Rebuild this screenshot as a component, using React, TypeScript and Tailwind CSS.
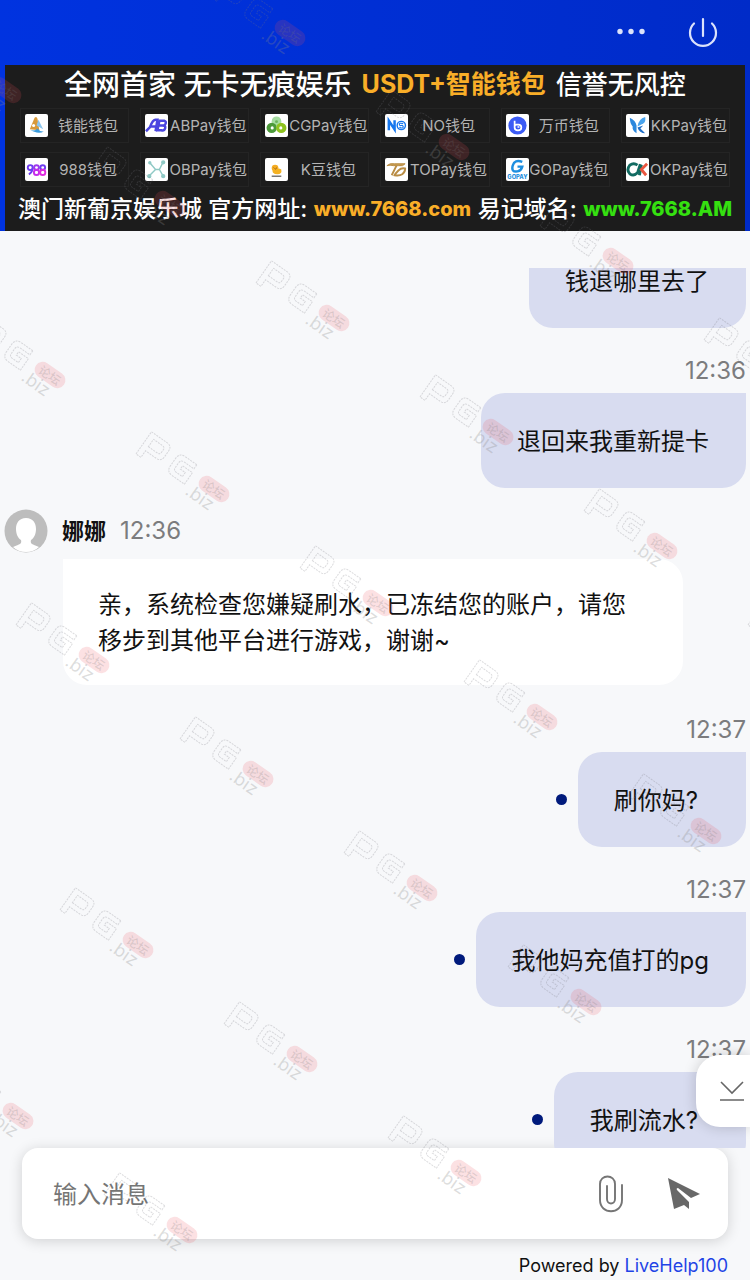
import type { ReactNode } from 'react';

const wallets: { name: string; icon: ReactNode }[] = [
  {
    name: '钱能钱包',
    icon: (
      <>
        <path d="M5 16L10 4q2-2 3 1l2 12z" fill="#d99a3a" />
        <circle cx="9" cy="12" r="1.6" fill="#fff" />
        <path d="M12 12l2-6 5 10z" fill="#8cc6ee" />
        <path d="M4 16q5 3 9-1 3 4 7 3-6 4-16-2z" fill="#3a9bdc" />
      </>
    ),
  },
  {
    name: 'ABPay钱包',
    icon: (
      <g fill="none" stroke="#4b46e0" strokeWidth="2.6">
        <path d="M1 18l4-4q3-8 6-8h2l-2 12M6 13h6" />
        <path d="M14 7h6q3 1 1 4-1 1-3 1h-4M18 12q4 0 3 3t-4 2h-4l2-10" />
      </g>
    ),
  },
  {
    name: 'CGPay钱包',
    icon: (
      <>
        <circle cx="12" cy="7.5" r="5" fill="#a5dca0" />
        <circle cx="7" cy="14.5" r="5.4" fill="#4c9a3a" />
        <circle cx="17" cy="14.5" r="5.4" fill="#8fc31f" />
        <circle cx="7.5" cy="14.5" r="1.6" fill="#fff" />
        <circle cx="16.5" cy="14.5" r="1.6" fill="#fff" />
        <circle cx="12" cy="8" r="1.5" fill="#6bb35c" />
      </>
    ),
  },
  {
    name: 'NO钱包',
    icon: (
      <g fill="none" stroke="#1677ee">
        <path d="M4 17V7l6 9V6.5" strokeWidth="2.6" />
        <circle cx="17" cy="12" r="4.3" strokeWidth="1.5" />
        <path d="M19 10q-4-1-4 .7t2 1.3 2 1.5-4 .5" strokeWidth="1.2" />
      </g>
    ),
  },
  {
    name: '万币钱包',
    icon: (
      <>
        <circle cx="12" cy="12" r="9.5" fill="#3b5bf5" />
        <path d="M9 7v7q0 3 3.500 3t3.500-3-3-3h-2q-2 0-2 2" fill="none" stroke="#fff" strokeWidth="1.8" />
        <path d="M12 13.5h2" stroke="#fff" strokeWidth="1.5" />
      </>
    ),
  },
  {
    name: 'KKPay钱包',
    icon: (
      <>
        <path d="M4 4q6 3 7 8v8q-5-3-4-7-3-3-3-9z" fill="#2b87dd" />
        <path d="M20 3q-7 2-8 10l6-3q3-2 2-7z" fill="#49a4ee" />
        <path d="M12 14l6-2-3 3 5 5q-6 0-8-6z" fill="#1f6fc8" />
      </>
    ),
  },
  {
    name: '988钱包',
    icon: (
      <g fill="none" strokeWidth="2">
        <circle cx="5.5" cy="10" r="2.6" stroke="#6f3df0" />
        <path d="M8 10q0 5-4 7" stroke="#6f3df0" />
        <circle cx="12" cy="10" r="2.5" stroke="#9c36ee" />
        <circle cx="12" cy="15" r="2.7" stroke="#c52bec" />
        <circle cx="18.5" cy="10" r="2.5" stroke="#6f3df0" />
        <circle cx="18.5" cy="15" r="2.7" stroke="#e02be0" />
      </g>
    ),
  },
  {
    name: 'OBPay钱包',
    icon: (
      <g stroke="#8fc9c5" strokeWidth="1.5" fill="#8fc9c5">
        <path d="M5 5l6 7h4l4-8M11 12l-7 7M15 12l4 7" fill="none" />
        <circle cx="5" cy="5" r="1" />
        <circle cx="19" cy="4.5" r="1.5" />
        <circle cx="4.5" cy="19" r="1.5" />
        <circle cx="19" cy="19" r="1.5" />
      </g>
    ),
  },
  {
    name: 'K豆钱包',
    icon: (
      <>
        <circle cx="10.5" cy="10.5" r="3.5" fill="#f4ac22" />
        <path d="M8 12h4q2-2 5 0 1 5-4 5-6 0-5-5z" fill="#f4b223" />
        <path d="M9 10l1 1m2-1l-1 2" stroke="#9a5e10" />
        <path d="M7 19h10" stroke="#777" strokeWidth="1.5" />
      </>
    ),
  },
  {
    name: 'TOPay钱包',
    icon: (
      <g fill="none" stroke="#b98d45">
        <path d="M2 8q3-3 8-2h11q-2 3-7 2H9q-4-1-7 0z" fill="#c79b52" />
        <path d="M12 8L7 18M21 11q-4-1-7 2t-4 5q5 1 8-1t3-6z" strokeWidth="2" />
      </g>
    ),
  },
  {
    name: 'GOPay钱包',
    icon: (
      <>
        <path d="M17 4q-8-3-10 4t5 6q4-1 5-5h-5" fill="none" stroke="#1e8fe0" strokeWidth="2.5" />
        <text x="12" y="22" textAnchor="middle" fontSize="6" fontWeight="800" fill="#1e8fe0">GOPAY</text>
      </>
    ),
  },
  {
    name: 'OKPay钱包',
    icon: (
      <g fill="none" strokeWidth="3">
        <path d="M12 7.5q-4-3-8 0-4 5 0 9 4 3 8-1l3-9" stroke="#126b62" />
        <path d="M14 18l2-11" stroke="#126b62" />
        <path d="M22 6l-6 6 5 6" stroke="#e8563f" />
      </g>
    ),
  },
];

const columns = [-4, -3, -2, -1, 0, 1, 2, 3];
const rows = [-1, 0, 1, 2, 3, 4, 5, 6];

const Watermark = () => (
  <svg className="pointer-events-none absolute inset-0 z-20 h-full w-full" aria-hidden="true">
    <defs>
      <g id="mark" transform="rotate(35)">
        <g fill="none" stroke="#77777f" strokeOpacity="0.26" strokeWidth="1" strokeDasharray="2 1">
          <path d="M-84 16v-27h19q6 0 6 6v7q0 6-6 6h-13v8zM-78 3h11q3 0 3-3v-3q0-3-3-3h-11z" />
          <path d="M-28 -10h-14q-7 0-7 7v9q0 7 7 7h15V-1h-12v4h6v5h-7q-4 0-4-3v-6q0-4 4-4h12z" />
        </g>
        <rect x="-17" y="-8" width="34" height="16" rx="8" fill="#f04b5a" fillOpacity="0.17" />
        <text x="0" y="5" textAnchor="middle" fontSize="12" fontWeight="500" fill="#777" fillOpacity="0.22">论坛</text>
        <text x="-22" y="21" fontSize="18" fill="#888" fillOpacity="0.28">.biz</text>
      </g>
    </defs>
    {columns.map((a) =>
      rows.map((b) => <use key={`${a}:${b}`} href="#mark" x={334 + a * 164 - b * 120} y={318 + a * 114 + b * 171} />),
    )}
  </svg>
);

const Banner = () => (
  <div className="mx-[5px] flex h-[166px] flex-col bg-[#1c1c1c] text-white">
    <p className="flex h-[43px] items-center justify-center gap-[10px] pb-1 text-[26px] font-medium whitespace-nowrap">
      <span className="text-[28px]">全网首家 无卡无痕娱乐</span>
      <b className="text-[25px] font-bold text-[#f9ae28]">USDT+智能钱包</b>
      <span>信誉无风控</span>
    </p>
    <ul className="grid grid-cols-6 gap-x-[11px] gap-y-[9px] px-[15px]">
      {wallets.map((wallet) => (
        <li key={wallet.name} className="flex h-[35px] items-center border border-[#242424] pl-1">
          <svg viewBox="0 0 24 24" className="h-[23px] w-[23px] shrink-0 rounded-xs bg-white">
            {wallet.icon}
          </svg>
          <span className="flex-1 text-center text-[15px] leading-5 whitespace-nowrap text-[#b4b4b4]">{wallet.name}</span>
        </li>
      ))}
    </ul>
    <p className="flex flex-1 items-center justify-between px-[13px] text-[23px] font-medium whitespace-nowrap">
      <span>澳门新葡京娱乐城 官方网址:</span>
      <a href="#com" className="text-[20px] font-extrabold text-[#f9ae28]">www.7668.com</a>
      <span>易记域名:</span>
      <a href="#am" className="text-[20px] font-extrabold text-[#35e010]">www.7668.AM</a>
    </p>
  </div>
);

const Header = () => (
  <header className="bg-linear-to-r from-[#0033e0] to-[#002bc8]">
    <div className="flex h-[65px] items-center justify-end gap-10 pr-[31px] text-[#dbe2fb]">
      <button type="button" aria-label="More">
        <svg viewBox="0 0 32 32" className="h-8 w-8" fill="currentColor">
          <circle cx="5" cy="14.5" r="2.7" />
          <circle cx="16" cy="14.5" r="2.7" />
          <circle cx="27" cy="14.5" r="2.7" />
        </svg>
      </button>
      <button type="button" aria-label="End chat">
        <svg viewBox="0 0 32 32" className="h-8 w-8" fill="none" stroke="currentColor" strokeWidth="2.2" strokeLinecap="round">
          <path d="M16 2v17M7 6.500a13 13 0 1 0 18 0" />
        </svg>
      </button>
    </div>
    <Banner />
  </header>
);

const Bubble = ({ text, unread }: { text: string; unread?: boolean }) => (
  <div className="flex items-center justify-end gap-[11px]">
    {unread && <span className="h-[11px] w-[11px] rounded-full bg-[#001a7c]" />}
    <p
      className={`rounded-3xl rounded-tr-none bg-[#d8dcf0] pt-[31px] pb-7 pl-9 text-[24px] leading-9 ${
        text.endsWith('?') ? 'pr-12' : 'pr-[37px]'
      }`}
    >
      {text}
    </p>
  </div>
);

const Sent = ({ time, text, unread }: { time: string; text: string; unread?: boolean }) => (
  <article>
    <time className="mt-[29px] mb-2 block text-right text-[24px] leading-7 text-[#7c7c7e]">{time}</time>
    <Bubble text={text} unread={unread} />
  </article>
);

const Received = () => (
  <article className="pt-[21px]">
    <div className="flex items-center gap-[14px]">
      <svg viewBox="0 0 44 44" className="h-[44px] w-[44px]">
        <circle cx="22" cy="22" r="21.5" fill="#bdbdbd" />
        <path d="M22 9c-7 0-10 5-10 11 0 5 2 9 5 11 1 4-1 4-8 7q5 5 13 5t13-5c-7-3-9-3-8-7 3-2 5-6 5-11 0-6-3-11-10-11z" fill="#fff" />
      </svg>
      <b className="text-[22px] leading-7 font-bold">娜娜</b>
      <time className="text-[24px] leading-7 text-[#7c7c7e]">12:36</time>
    </div>
    <p className="mt-[6px] mr-[63px] ml-[59px] rounded-3xl rounded-tl-none bg-white pt-7 pr-[45px] pb-[26px] pl-[35px] text-[24px] leading-9">
      亲，系统检查您嫌疑刷水，已冻结您的账户，请您移步到其他平台进行游戏，谢谢~
    </p>
  </article>
);

const Composer = () => (
  <form className="mx-[22px] flex h-[91px] items-center rounded-2xl bg-white pr-[28px] pl-[31px] shadow-[0_2px_14px_rgba(0,0,0,0.16)]">
    <input
      aria-label="输入消息"
      placeholder="输入消息"
      className="min-w-0 flex-1 bg-transparent pt-[2px] text-[24px] leading-9 outline-none placeholder:text-[#757575]"
    />
    <button type="button" aria-label="Attach file" className="mr-[44px]">
      <svg viewBox="0 0 26 38" className="h-[38px] w-[26px]" fill="none" stroke="#757575" strokeWidth="1.9" strokeLinecap="round">
        <path d="M24 10v15c0 15-22 15-22 0V9c0-10 15-10 15 0v15c0 6-8 6-8 0V11" />
      </svg>
    </button>
    <button type="submit" aria-label="Send">
      <svg viewBox="0 0 32 32" className="h-8 w-8" fill="#686868">
        <path d="M0 0l32 16-9 4L10 10q-2 0-1 2l12 12v7l-5-4-10 4z" />
      </svg>
    </button>
  </form>
);

export default function App() {
  return (
    <div
      lang="zh-CN"
      className="relative flex h-screen flex-col overflow-hidden bg-[#f7f8fa] font-[Inter,'Noto_Sans_CJK_SC',sans-serif] text-[#111]"
    >
      <Header />
      <main className="relative mt-[37px] min-h-0 flex-1">
        <div className="h-full overflow-hidden px-1">
          <div className="-mt-[35px]">
            <Bubble text="钱退哪里去了" />
            <Sent time="12:36" text="退回来我重新提卡" />
            <Received />
            <div className="pt-[2px]">
              <Sent time="12:37" text="刷你妈?" unread />
            </div>
            <Sent time="12:37" text="我他妈充值打的pg" unread />
            <Sent time="12:37" text="我刷流水?" unread />
          </div>
        </div>
        <button
          type="button"
          aria-label="Scroll to latest"
          className="absolute right-0 bottom-[21px] flex h-[72px] w-[54px] items-center justify-end rounded-l-3xl bg-white pr-[6px] shadow-[0_0_14px_rgba(0,0,0,0.18)]"
        >
          <svg viewBox="0 0 24 24" className="h-6 w-6" fill="none" stroke="#666" strokeWidth="1.6">
            <path d="M1 3l11 11L23 3M0 21h24" />
          </svg>
        </button>
      </main>
      <Composer />
      <footer className="flex h-[41px] items-center justify-end pt-3 pr-[22px] text-[18px]">
        <span>
          Powered by{' '}
          <a href="#livehelp" className="text-[#1f44e6]">
            LiveHelp100
          </a>
        </span>
      </footer>
      <Watermark />
    </div>
  );
}
